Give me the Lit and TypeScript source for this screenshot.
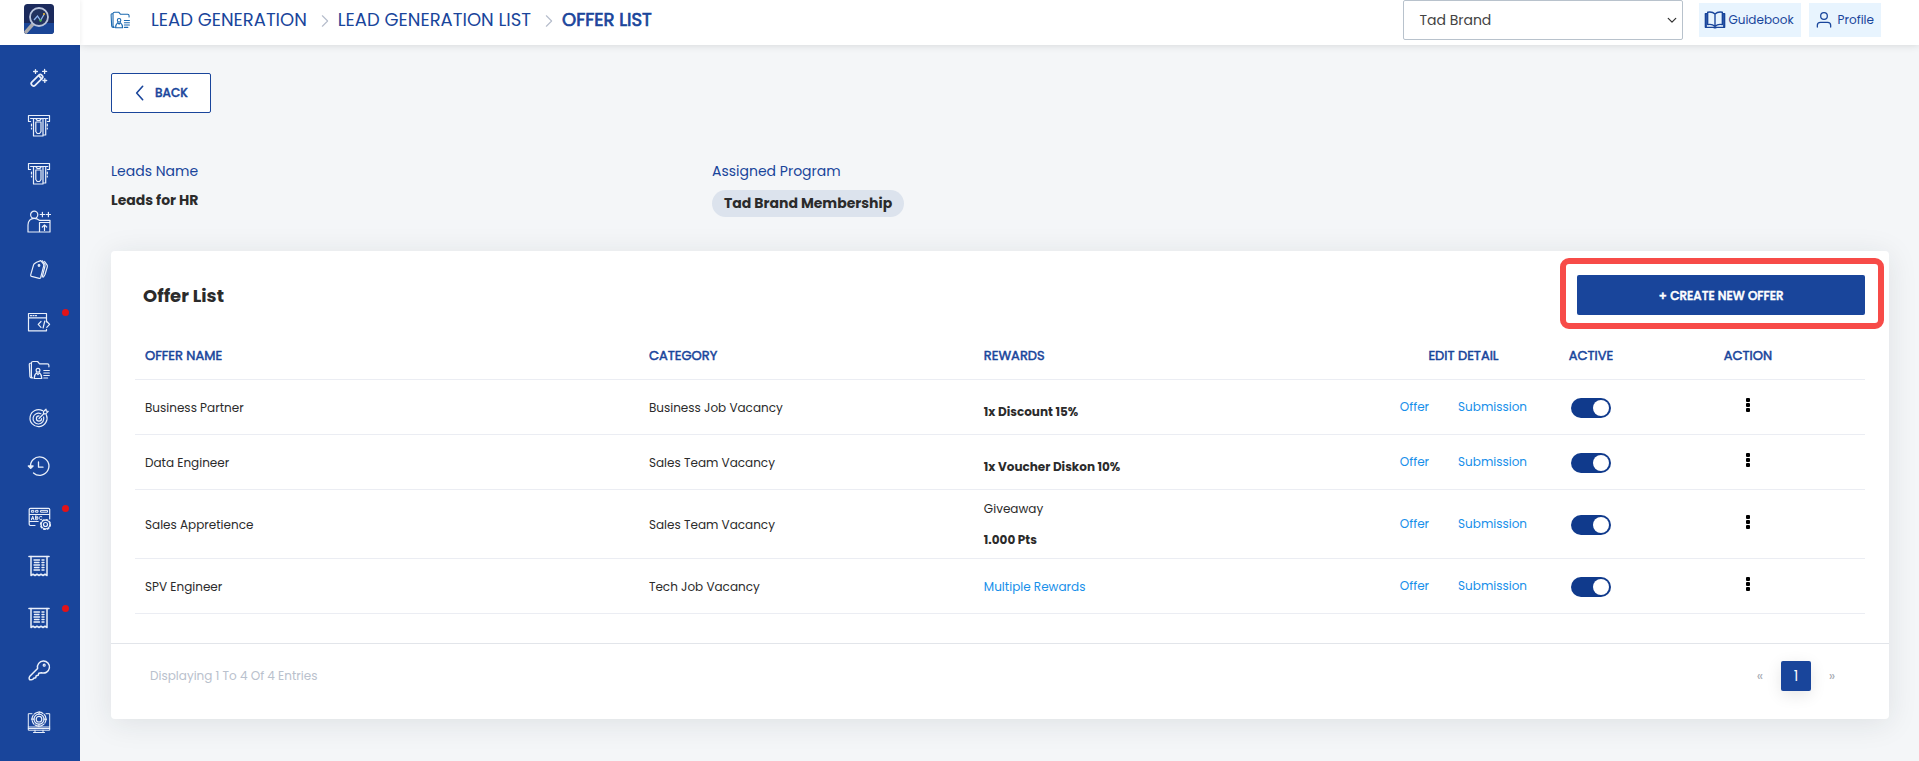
import { LitElement, html, svg, css, nothing, SVGTemplateResult } from "lit";
import { customElement, property } from "lit/decorators.js";

const icons: Record<string, SVGTemplateResult> = {
  wand: svg`
    <g stroke-width="1.7"><rect x="3" y="12" width="14" height="4.6" rx="2" transform="rotate(-45 10 14.3)"/>
    <path d="M11.6 9.6l3.2 3.2"/></g>
    <path stroke-width="1.3" d="M8.5 3.6v3.8M6.6 5.5h3.8M17.6 3.4v4M15.6 5.4h4M17.8 12.6v3.8M15.9 14.5h3.8"/>`,
  ticket: svg`
    <path d="M3.6 7.5H1.5v-6h21v6h-2.1M3.6 4.5h17.2M6.5 4.5V22H16V4.5M18.7 4.5V21h-2.5"/>
    <path d="M9 4.500c0 1.200 1 2 2.500 2s2.500-.8 2.500-2M8.800 8H14v9.500l-1.400 2h-2.400l-1.400-2zM4.500 10v2M4.500 14v1M20.300 10v2M20.300 14v1"/>`,
  person: svg`
    <circle cx="7.2" cy="4.8" r="3.6"/>
    <path d="M12 10.200C10.800 8.900 9 8.400 7.200 8.400 3.500 8.400 1 11 1 15v7h22v-9.500H12.500V22M12.500 10.300H23v2.200M17.500 20.500V15M15.300 17l2.200-2.200 2.200 2.200M13.200 4.500h4.400M15.400 2.300v4.400M19.200 4.500h4.400M21.400 2.300v4.400"/>`,
  tags: svg`
    <path d="M9.600 4.200l4.200-1.600 2.600 3.300c.4.6.5 1.200.3 1.900l-3 11.600c-.2.7-.8 1.100-1.500.9L4.600 18.400c-.7-.2-1.100-.9-.9-1.600l2.800-9.700c.2-.7.6-1.200 1.200-1.600z"/>
    <circle cx="12" cy="7.500" r=".8"/><path d="M15.400 2.800l2.300 3.200c.4.6.5 1.300.3 2L15.200 19M17.600 3.500L20 6.900c.4.6.5 1.300.3 2L18 16.500 16.500 19"/>`,
  browser: svg`
    <path d="M19.500 12V3.500h-18v17.300h18v-1.500M1.500 7.800h18M3.500 5.700h1M6 5.700h1M8.500 5.700h1M14 11.500l-2.800 2.900 2.800 2.900M19.800 11.500l2.800 2.900-2.800 2.900M17.800 11l-1.700 7"/>`,
  folder: svg`
    <path d="M5.800 20H4.600c-1 0-1.600-.7-1.700-1.600L2.300 6.500C2.200 5.500 3 5 4 5M5.800 20c-1-.3-1.400-1-1.400-2V5.200c0-1.100.7-1.700 1.700-1.700h4.500l2 2.300h7.800c1 0 1.500.6 1.500 1.500v1.500"/>
    <circle cx="11" cy="12.3" r="1.9"/><path d="M7.200 20.500c.1-3 .9-4.600 2.300-5.700l1.500 1.800 1.500-1.800c1.400 1.100 2.200 2.700 2.300 5.700z"/>
    <path d="M16.800 12.500h5.500M16.800 15h5.500M16.800 17.500h5.500M16.800 20h3.800"/>`,
  target: svg`
    <path d="M15.500 4.600A8.500 8.500 0 1 0 19.300 8.700M13.900 7.800A5.400 5.400 0 1 0 16.600 11M12 9.900a2.600 2.600 0 1 0 2.600 2.600"/>
    <path d="M12 12.500l5-5M16.500 5.500L19 3.200l.3 1.900 1.900.3-2.400 2.500h-2.300z"/>`,
  history: svg`
    <path stroke-width="1.300" d="M3.600 13.400A9.200 9.200 0 1 1 6.500 18.900"/><path stroke-width="1.500" d="M1.400 12l2.300 2.300L6 12z"/><path d="M11.500 8v5.200H16" stroke-width="1.300"/>`,
  form: svg`
    <path d="M8 19.500H3.500c-.8 0-1.300-.5-1.300-1.200V3.500c0-.7.5-1.200 1.300-1.200h18c.7 0 1.200.5 1.200 1.200V13M2.200 8.500h20.500M2.200 15.500h9"/>
    <path stroke-width="1" d="M4.800 4.400h2v1.800h-2zM9 4.400h2v1.800H9zM14 4.400h6.500v1.800H14z"/>
    <path stroke-width="1" d="M4.400 13.800l1.300-3.600L7 13.800M4.900 12.700h1.600M8.600 10.200v3.500h1.300a.9.900 0 0 0 0-1.800H8.600h1.200a.8.800 0 0 0 0-1.700zM14.800 10.700c-1.700-1-2.700.2-2.700 1.300s1 2.200 2.700 1.300"/>
    <circle cx="18.500" cy="18.500" r="2"/><circle cx="18.500" cy="18.500" r="4.300"/><circle cx="18.500" cy="18.500" r="5" stroke-dasharray="1.800 2.120"/>`,
  receipt: svg`
    <path d="M2 2.500h20" stroke-width="1.600"/><path stroke-width="1.500" d="M4 2.500V21.500l2-1.300 2 1.300 2-1.300 2 1.300 2-1.300 2 1.300 2-1.300 2 1.300V2.500"/>
    <path stroke-width="1.400" d="M7 6h5.500M7.500 8.500h4.500M7 11h5.500M7.500 13.500h4.500M7 16h5.500M15 6h2M15 8.500h2M15 11h2M15 13.500h2M15 16h2"/>`,
  key: svg`
    <path stroke-width="1.500" d="M10.600 10.400a6 6 0 1 1 3.800 4.300l-2.600.6-.6 2-2 .5-.5 1.900-2 .6-1 1.200c-.7.5-3 .4-3.300-.2-.4-.7-.3-2 .2-2.700z"/><circle cx="17.200" cy="7.200" r="1"/>`,
  monitor: svg`
    <path d="M5 3.700H1.300v16.500h21.400V3.700H19M1.300 17h21.400M1.300 18.500h21.400M8 20.200v2.300M16 20.200v2.300M6.500 22.500h11" stroke-width="1"/>
    <circle cx="12" cy="9.200" r="2.800"/><circle cx="12" cy="9.200" r="5"/><circle cx="12" cy="9.200" r="7" stroke-dasharray="4 1.500"/>
    <path d="M12 1.500V4M12 14.200v2.500M4.500 9.200H7M17 9.200h2.500"/>`,
  chevron: svg`<path stroke-width="1.500" d="M8.500 5l7 7-7 7"/>`,
  back: svg`<path stroke-width="2.400" d="M16 2L7 12l9 10"/>`,
  down: svg`<path stroke-width="3" d="M3 8l9 9 9-9"/>`,
  book: svg`
    <path stroke-width="1.500" d="M12 5.500c-2-2-5.500-2.500-8-2V17c2.500-.5 6 0 8 2 2-2 5.500-2.500 8-2V3.500c-2.500-.5-6 0-8 2zM12 5.500V19M4 5H1.500v15H10l2 .7 2-.7h8.500V5H20"/>
    <path stroke-width="1.500" d="M2.400 5v15M21.600 5v15"/>`,
  user: svg`<g stroke-width="1.900"><circle cx="12" cy="6" r="5"/><path d="M2 22.500V20c0-2.700 2-4.500 4.700-4.500h10.600c2.700 0 4.700 1.800 4.700 4.500v2.500"/></g>`,
};

@customElement("line-icon")
export class LineIcon extends LitElement {
  @property() name = "wand";
  static styles = css`
    :host { display: block; width: 24px; height: 24px; flex: none; }
    svg {
      display: block; width: 100%; height: 100%;
      fill: none; stroke: currentColor; stroke-width: 1.2;
      stroke-linecap: round; stroke-linejoin: round;
    }
  `;
  render() {
    return html`<svg viewBox="0 0 24 24" aria-hidden="true">${icons[this.name]}</svg>`;
  }
}

interface MenuEntry { icon: string; label: string; badge?: boolean; spaced?: boolean; }

const menu: MenuEntry[] = [
  { icon: "wand", label: "Setup" },
  { icon: "ticket", label: "Vouchers" },
  { icon: "ticket", label: "Coupons" },
  { icon: "person", label: "Members" },
  { icon: "tags", label: "Tags" },
  { icon: "browser", label: "Integration", badge: true, spaced: true },
  { icon: "folder", label: "Lead generation" },
  { icon: "target", label: "Goals" },
  { icon: "history", label: "History" },
  { icon: "form", label: "Forms", badge: true, spaced: true },
  { icon: "receipt", label: "Receipts" },
  { icon: "receipt", label: "Invoices", badge: true, spaced: true },
  { icon: "key", label: "Access", spaced: true },
  { icon: "monitor", label: "Settings", spaced: true },
];

interface Offer { name: string; category: string; kind?: string; reward?: string; multiple?: boolean; }

const offers: Offer[] = [
  { name: "Business Partner", category: "Business Job Vacancy", reward: "1x Discount 15%" },
  { name: "Data Engineer", category: "Sales Team Vacancy", reward: "1x Voucher Diskon 10%" },
  { name: "Sales Appretience", category: "Sales Team Vacancy", kind: "Giveaway", reward: "1.000 Pts" },
  { name: "SPV Engineer", category: "Tech Job Vacancy", multiple: true },
];

@customElement("app-root")
export class AppRoot extends LitElement {
  static styles = css`
    :host {
      --blue: #19459b;
      --link: #178fea;
      --ink: #2b2b2b;
      display: grid;
      grid-template-columns: 80px minmax(0, 1fr);
      grid-template-rows: 45px minmax(0, 1fr);
      min-height: 100vh;
      background: #f4f6f8;
      color: var(--ink);
      font-family: Poppins, Inter, "Liberation Sans", sans-serif;
      font-size: 12px;
      line-height: 20px;
    }
    * { box-sizing: border-box; }
    a { color: var(--link); text-decoration: none; }
    button, select { font: inherit; cursor: pointer; }

    .brand { background: #fff; padding: 4px 0 0 24px; z-index: 2; box-shadow: 1px 0 4px rgba(0, 0, 0, 0.06); }
    .logo { display: block; width: 30px; height: 30px; }

    .header {
      display: flex; align-items: flex-start; justify-content: space-between;
      background: #fff; padding: 0 38px 0 28px;
      box-shadow: 0 0 8px rgba(0, 0, 0, 0.14);
      z-index: 1;
    }
    .crumbs { display: flex; align-items: center; color: var(--blue); font-size: 18px; height: 40px; }
    .crumbs a { color: inherit; }
    .crumb-icon { color: #1b69b0; width: 22px; height: 22px; margin: 0 20px 0 1px; }
    .crumb-sep { color: #b5bccb; width: 18px; height: 18px; margin: 2px 4px 0 9px; }
    .crumbs .current { -webkit-text-stroke: 0.7px currentColor; }
    .tools { display: flex; align-items: flex-start; }
    .picker { position: relative; width: 280px; margin-right: 16px; }
    .picker select {
      appearance: none; display: block; width: 100%; height: 40px; padding: 0 32px 0 15px;
      border: 1px solid #b8c2cc; border-radius: 2px; background: #fff; color: #444; font-size: 14px;
    }
    .picker line-icon { position: absolute; right: 6px; top: 15px; width: 10px; height: 10px; pointer-events: none; color: #333; }
    .tool {
      display: flex; align-items: center; height: 34px; margin: 3px 8px 0 0; padding: 0 7px 0 5px;
      background: #e8f4fe; color: var(--blue); font-size: 12px; gap: 2px;
    }
    .tool:last-child { margin-right: 0; gap: 6px; }
    .book { width: 22px; height: 22px; }
    .user { width: 16px; height: 16px; margin-left: 2px; }

    .sidebar { background: var(--blue); padding-top: 9px; color: #e9effa; }
    .menu { list-style: none; margin: 0; padding: 0; }
    .menu a { display: flex; justify-content: center; align-items: center; height: 48px; padding-right: 2px; color: inherit; position: relative; }
    .spaced { margin-top: 4px; }
    .badge { position: absolute; left: 62px; top: 11px; width: 7px; height: 7px; border-radius: 50%; background: #e11318; }

    .page { padding: 28px 30px 40px 31px; }
    .back {
      display: inline-flex; align-items: center; gap: 7px; height: 40px; width: 100px; padding: 0 0 0 20px;
      background: #fff; border: 1px solid var(--blue); border-radius: 2px; color: var(--blue);
      font-weight: 500; -webkit-text-stroke: 0.4px currentColor;
    }
    .back line-icon { width: 16px; height: 16px; }
    .facts { display: grid; grid-template-columns: 601px 1fr; margin: 47px 0 34px; font-size: 14px; }
    .facts dl { margin: 0; }
    .facts dt { color: var(--blue); line-height: 22px; }
    .facts dd { margin: 0; font-weight: 700; line-height: 22px; padding-top: 7px; }
    .facts .pill-row { padding-top: 8px; }
    .pill { display: inline-block; padding: 0 12px; line-height: 27px; border-radius: 14px; background: #dce3ed; }

    .card { background: #fff; border-radius: 4px; box-shadow: 0 4px 30px rgba(30, 35, 45, 0.1); }
    .card-body { padding: 24px 24px 29px; }
    .card-head { display: flex; justify-content: space-between; align-items: center; padding-left: 8px; }
    .card-head h2 { margin: 0; padding-top: 2px; font-size: 18px; font-weight: 700; }
    .create-wrap { position: relative; width: 288px; }
    .create {
      display: block; width: 100%; height: 40px; border: 0; border-radius: 2px; padding: 2px 0 0;
      background: var(--blue); color: #fff; font-weight: 500; -webkit-text-stroke: 0.5px currentColor;
    }
    .highlight {
      position: absolute; inset: -17px -19px -14px -17px; border: 6px solid #f74b48; border-radius: 9px; pointer-events: none;
    }

    table { width: 100%; border-collapse: collapse; table-layout: fixed; margin-top: 16px; }
    th, td { padding: 2px 10px 0; text-align: left; border-bottom: 1px solid #ebedf3; }
    th { height: 48px; color: var(--blue); font-size: 13px; font-weight: 400; -webkit-text-stroke: 0.5px currentColor; }
    td { height: 55px; }
    .c-name { width: 29.13%; }
    .c-category { width: 19.36%; }
    .c-reward { width: 23.24%; }
    .c-edit { width: 10.12%; }
    .c-active { width: 4.62%; }
    .center { text-align: center; }
    .active-cell { padding: 2px 0 0; }
    .reward { display: block; font-weight: 700; padding-top: 8px; }
    .kind { display: block; }
    .kind + .reward { padding: 11px 0 0; }
    td.two-line { padding: 9px 10px 8px; }
    .links { display: flex; justify-content: center; gap: 29px; padding-bottom: 2px; }
    .toggle {
      appearance: none; display: block; margin: 0 auto; width: 40px; height: 20px; border-radius: 10px;
      background: #b8c2cc; cursor: pointer; padding: 2px;
    }
    .toggle::before { content: ""; display: block; width: 16px; height: 16px; border-radius: 50%; background: #fff; }
    .toggle:checked { background: #103a8c; padding-left: 22px; }
    .more { display: inline-flex; border: 0; background: none; padding: 0 8px 6px; vertical-align: middle; }
    .more svg { display: block; width: 4px; height: 14px; fill: #000; }

    .card-foot {
      display: flex; justify-content: space-between; align-items: center; border-top: 1px solid #e2e5ea;
      padding: 17px 42px 28px 39px; color: #b9c1cd; font-size: 12px;
    }
    .pager { display: flex; gap: 6px; }
    .pager button {
      width: 30px; height: 30px; border: 0; border-radius: 2px; background: none; color: #a9adb5; padding: 0; font-size: 14px;
    }
    .pager .on { background: var(--blue); color: #fff; box-shadow: 0 4px 16px rgba(0, 0, 0, 0.1); }
  `;

  private renderReward(o: Offer) {
    if (o.multiple) return html`<a href="#rewards">Multiple Rewards</a>`;
    return html`${o.kind ? html`<span class="kind">${o.kind}</span>` : nothing}<span class="reward">${o.reward}</span>`;
  }

  private renderOffer(o: Offer) {
    return html`<tr>
      <td>${o.name}</td>
      <td>${o.category}</td>
      <td class=${o.kind ? "two-line" : ""}>${this.renderReward(o)}</td>
      <td><div class="links"><a href="#offer">Offer</a><a href="#submission">Submission</a></div></td>
      <td class="active-cell"><input class="toggle" type="checkbox" checked aria-label="${o.name} active" /></td>
      <td class="center">
        <button class="more" aria-label="Actions for ${o.name}">
          <svg viewBox="0 0 4 14"><rect width="4" height="4" rx="1" /><rect y="5" width="4" height="4" rx="1" /><rect y="10" width="4" height="4" rx="1" /></svg>
        </button>
      </td>
    </tr>`;
  }

  render() {
    return html`
      <div class="brand">
        <svg class="logo" viewBox="0 0 30 30" role="img" aria-label="Home">
          <defs><clipPath id="c"><rect width="30" height="30" rx="3.5" /></clipPath></defs>
          <g clip-path="url(#c)">
            <rect width="30" height="30" fill="#1b2a5c" /><rect y="19" width="30" height="11" fill="#1a4596" />
            <path d="M1 29l8-9" stroke="#a9a9ad" stroke-width="3.6" stroke-linecap="round" />
            <circle cx="15" cy="13" r="9" fill="#22325f" stroke="#b9c4dc" stroke-width="1.8" />
            <path d="M10 16l3.500-4 3 4.500 3.500-6" fill="none" stroke="#8fb4ee" stroke-width="1.3" />
            <circle cx="16.500" cy="16.500" r="1.2" fill="#49b84a" /><circle cx="20" cy="10" r="1.1" fill="#e6b53a" />
          </g>
        </svg>
      </div>
      <header class="header">
        <nav class="crumbs" aria-label="Breadcrumb">
          <line-icon class="crumb-icon" name="folder"></line-icon>
          <a href="#lead">LEAD GENERATION</a>
          <line-icon class="crumb-sep" name="chevron"></line-icon>
          <a href="#list">LEAD GENERATION LIST</a>
          <line-icon class="crumb-sep" name="chevron"></line-icon>
          <a class="current" href="#offers" aria-current="page">OFFER LIST</a>
        </nav>
        <div class="tools">
          <div class="picker">
            <select aria-label="Brand"><option>Tad Brand</option></select>
            <line-icon name="down"></line-icon>
          </div>
          <a class="tool" href="#guidebook"><line-icon class="book" name="book"></line-icon>Guidebook</a>
          <a class="tool" href="#profile"><line-icon class="user" name="user"></line-icon>Profile</a>
        </div>
      </header>
      <nav class="sidebar" aria-label="Main">
        <ul class="menu">
          ${menu.map((m) => html`<li class=${m.spaced ? "spaced" : ""}>
            <a href="#menu" aria-label=${m.label}><line-icon name=${m.icon}></line-icon>${m.badge ? html`<span class="badge"></span>` : nothing}</a>
          </li>`)}
        </ul>
      </nav>
      <main class="page">
        <button class="back"><line-icon name="back"></line-icon>BACK</button>
        <section class="facts">
          <dl><dt>Leads Name</dt><dd>Leads for HR</dd></dl>
          <dl><dt>Assigned Program</dt><dd class="pill-row"><span class="pill">Tad Brand Membership</span></dd></dl>
        </section>
        <section class="card">
          <div class="card-body">
            <div class="card-head">
              <h2>Offer List</h2>
              <div class="create-wrap"><button class="create">+ CREATE NEW OFFER</button><span class="highlight"></span></div>
            </div>
            <table>
              <thead><tr>
                <th class="c-name">OFFER NAME</th>
                <th class="c-category">CATEGORY</th>
                <th class="c-reward">REWARDS</th>
                <th class="c-edit center">EDIT DETAIL</th>
                <th class="c-active center active-cell">ACTIVE</th>
                <th class="center">ACTION</th>
              </tr></thead>
              <tbody>${offers.map((o) => this.renderOffer(o))}</tbody>
            </table>
          </div>
          <footer class="card-foot">
            <span>Displaying 1 To 4 Of 4 Entries</span>
            <div class="pager">
              <button aria-label="Previous">«</button><button class="on">1</button><button aria-label="Next">»</button>
            </div>
          </footer>
        </section>
      </main>
    `;
  }
}
